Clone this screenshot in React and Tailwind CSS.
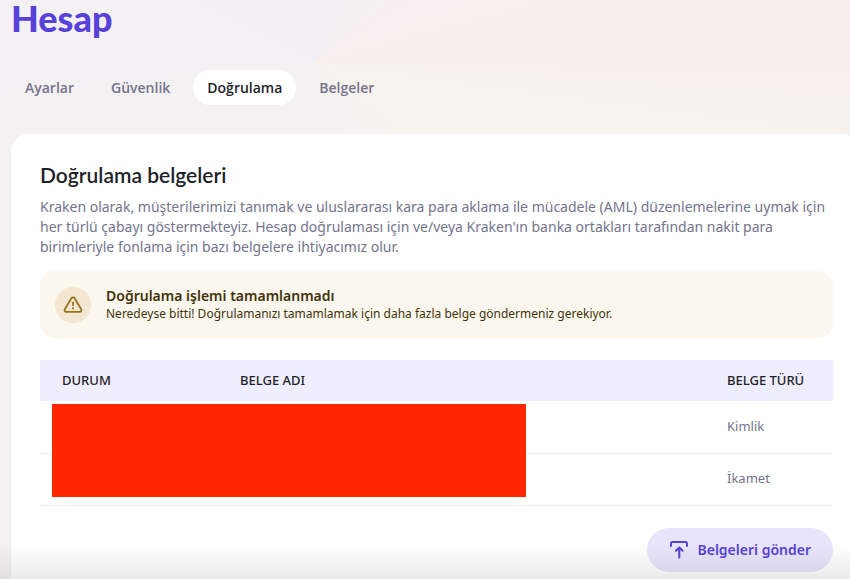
const tabs = ["Ayarlar", "Güvenlik", "Doğrulama", "Belgeler"];
const active = "Doğrulama";

function WarningIcon() {
  return (
    <svg viewBox="0 0 20 20" className="size-5" fill="none" stroke="#9a7118" strokeWidth="1.8" strokeLinecap="round" strokeLinejoin="round" aria-hidden="true">
      <path d="M8.400 3.300 1.800 14.300c-.7 1.200.1 2.500 1.400 2.500h13.600c1.300 0 2.100-1.300 1.400-2.500L11.600 3.300c-.7-1.200-2.500-1.200-3.200 0Z" />
      <path d="M10 6.800v4" strokeLinecap="butt" />
      <path d="M10 12.200v2" strokeLinecap="butt" />
    </svg>
  );
}

function UploadIcon() {
  return (
    <svg viewBox="0 0 20 20" className="size-5" fill="none" stroke="currentColor" strokeWidth="2" strokeLinecap="round" strokeLinejoin="round" aria-hidden="true">
      <path d="M2 6V3.500C2 2.500 2.600 2 3.500 2h13c.9 0 1.500.5 1.500 1.500V6" />
      <path d="M10.300 17.500V8M7 10.800l3.300-3.300 3.300 3.300" />
    </svg>
  );
}

export default function App() {
  return (
    <div className="relative flex min-h-screen flex-col overflow-hidden bg-[conic-gradient(at_315px_62px,#f2eff7_0deg,#f8efee_62deg,#f8efed_90deg,#f6f2ee_98deg,#f6f2ee_125deg,#f4f1f1_200deg,#f3f1f3_270deg,#f2f0f5_330deg,#f2eff7_360deg)] pl-[11px] font-['Noto_Sans',sans-serif]">
      <h1 className="font-[Lato,sans-serif] text-[36px] leading-9 font-black text-[#5741d9]">Hesap</h1>

      <nav className="mt-[34px] flex gap-[9px]">
        {tabs.map((tab) => (
          <a
            key={tab}
            href="#"
            aria-current={tab === active ? "page" : undefined}
            className={
              "rounded-full px-[14px] py-[7px] font-['Open_Sans',sans-serif] text-[14px] leading-[21px] font-semibold " +
              (tab === active ? "bg-white text-[#1f1f29]" : "text-[#74748c]")
            }
          >
            {tab}
          </a>
        ))}
      </nav>

      <main className="-mr-[11px] mt-[29px] grow rounded-t-[18px] bg-white pt-[29px] pr-7 pb-2 pl-[29px]">
        <h2 className="font-[Lato,sans-serif] text-[21px] leading-6 font-semibold text-[#1f1f29]">Doğrulama belgeleri</h2>
        <p className="mt-[10px] text-[14px] leading-5 text-[#74748c]">
          Kraken olarak, müşterilerimizi tanımak ve uluslararası kara para aklama ile mücadele (AML) düzenlemelerine uymak için
          <br />
          her türlü çabayı göstermekteyiz. Hesap doğrulaması için ve/veya Kraken'ın banka ortakları tarafından nakit para
          <br />
          birimleriyle fonlama için bazı belgelere ihtiyacımız olur.
        </p>

        <section className="mt-[14px] flex items-center gap-[15px] rounded-[15px] bg-[#fbf7ee] px-[15px] py-[15px]">
          <span className="flex size-9 shrink-0 items-center justify-center rounded-full bg-[#f2e8d2]">
            <WarningIcon />
          </span>
          <div className="text-[#42330b]">
            <h3 className="text-[14px] leading-[19px] font-semibold">Doğrulama işlemi tamamlanmadı</h3>
            <p className="text-[12px] leading-[18px]">
              Neredeyse bitti! Doğrulamanızı tamamlamak için daha fazla belge göndermeniz gerekiyor.
            </p>
          </div>
        </section>

        <div className="relative mt-[22px]">
          <table className="w-full table-fixed border-collapse text-left text-[13px]">
            <colgroup>
              <col className="w-[178px]" />
              <col />
              <col className="w-[128px]" />
            </colgroup>
            <thead>
              <tr className="h-[41px] bg-[#efeeff] text-[#1f1f29]">
                <th className="pl-[22px] font-medium">DURUM</th>
                <th className="pl-[22px] font-medium">BELGE ADI</th>
                <th className="pl-[22px] font-medium">BELGE TÜRÜ</th>
              </tr>
            </thead>
            <tbody className="text-[#74748c]">
              <tr className="h-[52px] border-b border-[#ededf0]">
                <td />
                <td />
                <td className="pl-[22px]">Kimlik</td>
              </tr>
              <tr className="h-[52px] border-b border-[#ededf0]">
                <td />
                <td />
                <td className="pl-[22px]">İkamet</td>
              </tr>
            </tbody>
          </table>
          <div className="absolute top-11 left-3 h-[93px] w-[474px] bg-[#ff2600]" />
        </div>

        <div className="mt-[22px] flex justify-end">
          <button type="button" className="flex h-11 items-center gap-2 rounded-full bg-[#e8e5fb] px-[22px] text-[14px] font-semibold text-[#5741d9]">
            <UploadIcon />
            Belgeleri gönder
          </button>
        </div>
      </main>

      <div className="pointer-events-none absolute inset-x-0 bottom-0 h-9 bg-linear-to-b from-transparent to-black/8" />
    </div>
  );
}
